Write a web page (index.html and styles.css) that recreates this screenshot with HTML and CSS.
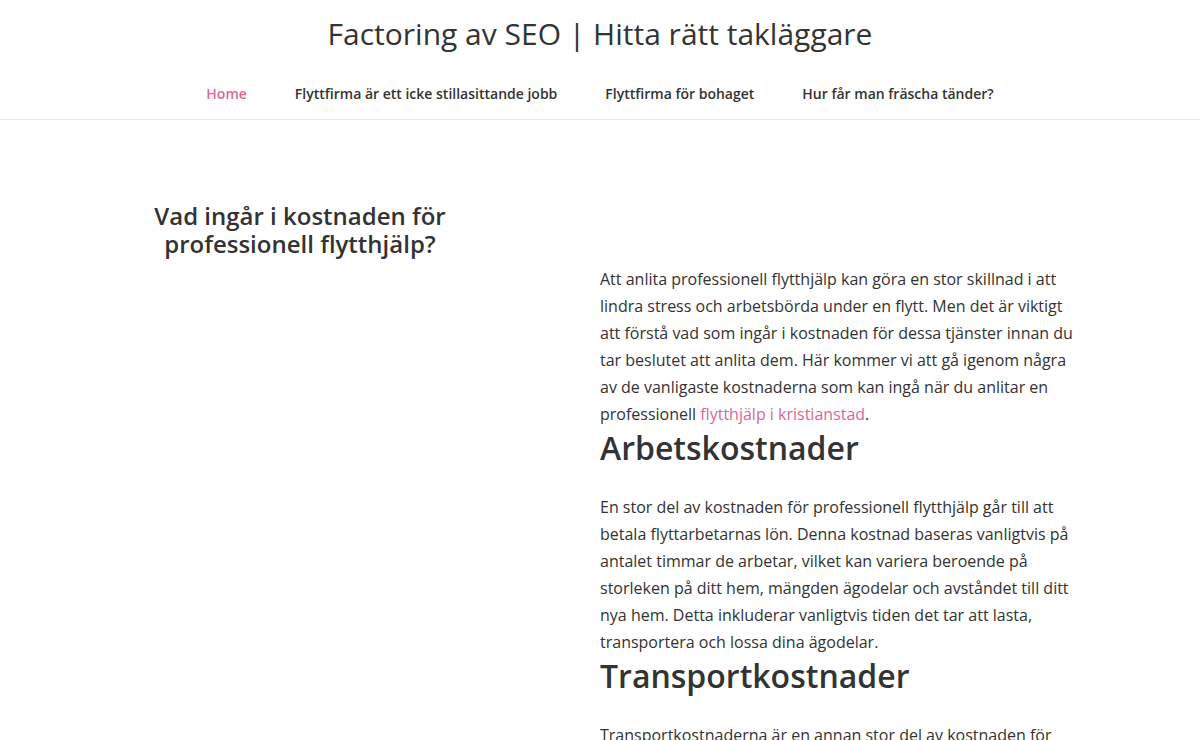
FILE: index.html
```html
<!DOCTYPE html>
<html lang="sv">
<head>
    <meta charset="UTF-8">
    <meta name="viewport" content="width=device-width, initial-scale=1.0">
    <title>Factoring av SEO | Hitta rätt takläggare</title>
    <link rel="stylesheet" href="styles.css">
</head>
<body>
    <header class="site-header">
        <div class="site-title">Factoring av SEO | Hitta rätt takläggare</div>
        <nav class="main-nav">
            <a href="#" class="current">Home</a>
            <a href="#">Flyttfirma är ett icke stillasittande jobb</a>
            <a href="#">Flyttfirma för bohaget</a>
            <a href="#">Hur får man fräscha tänder?</a>
        </nav>
    </header>

    <main class="content">
        <div class="side">
            <h1>Vad ingår i kostnaden för professionell flytthjälp?</h1>
        </div>
        <article class="post">
            <p>Att anlita professionell flytthjälp kan göra en stor skillnad i att lindra stress och arbetsbörda under en flytt. Men det är viktigt att förstå vad som ingår i kostnaden för dessa tjänster innan du tar beslutet att anlita dem. Här kommer vi att gå igenom några av de vanligaste kostnaderna som kan ingå när du anlitar en professionell <a href="#">flytthjälp i kristianstad</a>.</p>
            <h2>Arbetskostnader</h2>
            <p>En stor del av kostnaden för professionell flytthjälp går till att betala flyttarbetarnas lön. Denna kostnad baseras vanligtvis på antalet timmar de arbetar, vilket kan variera beroende på storleken på ditt hem, mängden ägodelar och avståndet till ditt nya hem. Detta inkluderar vanligtvis tiden det tar att lasta, transportera och lossa dina ägodelar.</p>
            <h2>Transportkostnader</h2>
            <p>Transportkostnaderna är en annan stor del av kostnaden för professionell flytthjälp. Detta inkluderar bränsle, fordonets storlek och avståndet mellan ditt gamla och nya hem.</p>
        </article>
    </main>
</body>
</html>
```

FILE: styles.css
```css
body {
    margin: 0;
    font-family: "Open Sans", Arial, sans-serif;
    color: #333;
    background: #fff;
}
a {
    color: #d9689a;
    text-decoration: none;
}
.site-header {
    border-bottom: 1px solid #e6e6e6;
    text-align: center;
}
.site-title {
    padding-top: 14px;
    font-size: 30px;
    line-height: 40px;
    font-weight: 400;
    color: #333;
}
.main-nav {
    display: flex;
    justify-content: center;
    gap: 48px;
    padding: 30px 0 15px;
}
.main-nav a {
    font-size: 14px;
    font-weight: 600;
    line-height: 20px;
    color: #333;
}
.main-nav a.current {
    color: #d9689a;
}
.content {
    display: grid;
    grid-template-columns: 360px 480px;
    column-gap: 120px;
    width: 960px;
    margin: 0 auto;
    padding-top: 82px;
}
.side h1 {
    margin: 0;
    text-align: center;
    font-size: 24px;
    line-height: 28px;
    font-weight: 600;
}
.post {
    padding-top: 64px;
}
.post p {
    margin: 0;
    font-size: 16px;
    line-height: 27px;
}
.post h2 {
    margin: 0 0 26px;
    font-size: 32px;
    line-height: 40px;
    font-weight: 600;
}
```
